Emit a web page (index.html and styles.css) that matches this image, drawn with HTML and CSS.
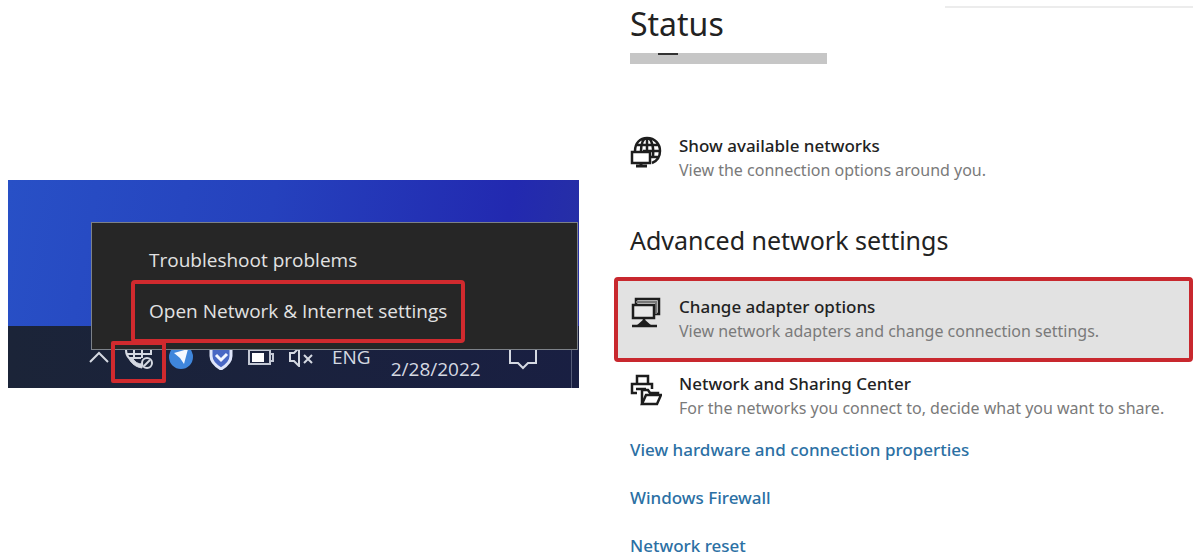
FILE: index.html
```html
<!DOCTYPE html>
<html lang="en">
<head>
  <meta charset="UTF-8">
  <meta name="viewport" content="width=device-width, initial-scale=1.0">
  <title>Network Status</title>
  <link rel="stylesheet" href="styles.css">
</head>
<body>
  <div class="page">
    <!-- Desktop with the tray menu open -->
    <section class="desktop">
      <div class="wallpaper"></div>

      <div class="menu">
        <button type="button" class="menu-item">Troubleshoot problems</button>
        <button type="button" class="menu-item marked">Open Network &amp; Internet settings</button>
      </div>

      <div class="taskbar">
        <button type="button" class="tray" aria-label="Show hidden icons">
          <svg width="20" height="20" viewBox="0 0 20 20"><path d="M1 15l9-9 9 9" fill="none" stroke="#d5d9e2" stroke-width="2"/></svg>
        </button>
        <button type="button" class="tray network" aria-label="Network">
          <svg width="30" height="30" viewBox="0 0 30 30" fill="none" stroke="#d5d9e2" stroke-width="2">
            <path d="M2 8c0 4 1 6 3 8h12M2 12h26M10 6v10M18 6v10M27 8v5"/>
            <path d="M5 17c3 5 7 8 13 9v-4c-4 0-7-2-9-5" fill="#d5d9e2" stroke-width="1"/>
            <circle cx="23" cy="21" r="5" fill="#1b2438"/>
            <path d="M20 24l6-6"/>
          </svg>
        </button>
        <button type="button" class="tray" aria-label="Assistant">
          <svg width="25" height="26" viewBox="0 0 25 26"><circle cx="12" cy="13" r="12" fill="#3f86dc"/><path d="M5 9l14-4-4 15-4-6z" fill="#f4f8ff"/></svg>
        </button>
        <button type="button" class="tray" aria-label="Security">
          <svg width="24" height="26" viewBox="0 0 24 26"><path d="M2 5l10-4 10 4v7c0 6-5 10-10 13C7 22 2 18 2 12z" fill="#4967c4" stroke="#dfe5fa" stroke-width="3"/><path d="M7 11l5 5 6-6" fill="none" stroke="#f3f6ff" stroke-width="3"/></svg>
        </button>
        <button type="button" class="tray" aria-label="Battery">
          <svg width="26" height="20" viewBox="0 0 26 20"><path d="M1 3h21v14H1zM22 7h3v7h-3" fill="none" stroke="#c3c8d4" stroke-width="2"/><path d="M4 6h12v9H4z" fill="#fff"/></svg>
        </button>
        <button type="button" class="tray" aria-label="Volume">
          <svg width="24" height="20" viewBox="0 0 24 20" fill="none" stroke="#d5d9e2" stroke-width="2"><path d="M1 6h4l5-5v18l-5-5H1zM15 8l8 8M23 8l-8 8"/></svg>
        </button>
        <span class="language">ENG</span>
        <time class="date" datetime="2022-02-28">2/28/2022</time>
        <button type="button" class="tray" aria-label="Notifications">
          <svg width="30" height="26" viewBox="0 0 30 26"><path d="M2 2h26v17h-8l-5 5-5-5H2z" fill="none" stroke="#d5d9e2" stroke-width="2"/></svg>
        </button>
        <span class="show-desktop"></span>
      </div>
    </section>

    <!-- Settings page -->
    <main class="settings">
      <h1>Status</h1>
      <div class="usage"></div>

      <a href="#" class="entry">
        <svg class="entry-icon" width="32" height="32" viewBox="0 0 32 32" fill="none" stroke="#1d1d1d" stroke-width="2.5">
          <path d="M5 15C5 7 10 2 17 2c8 0 13 6 13 13 0 6-3 10-8 12M7 9h21M13 15h17M21 21h8M11 15c0-7 2-13 6-13s7 7 6 19M17 2v13"/>
          <path d="M2 16h18v11H2z" fill="#fff"/>
          <path d="M11 27v4M6 30h11" stroke-width="3"/>
        </svg>
        <span class="entry-text">
          <span class="entry-title">Show available networks</span>
          <span class="entry-info">View the connection options around you.</span>
        </span>
      </a>

      <h2>Advanced network settings</h2>

      <a href="#" class="entry selected">
        <svg class="entry-icon" width="32" height="32" viewBox="0 0 32 32" fill="none" stroke="#1d1d1d" stroke-width="2.5">
          <path d="M6 7V2h23v15h-4"/>
          <path d="M6 5h20v12" stroke="#777" stroke-width="2"/>
          <path d="M3 8h21v13H3z" fill="#e9e9e9"/>
          <path d="M14 21v5M2 29h25"/>
          <path d="M14 22l8 7H6z" fill="#1d1d1d" stroke="none"/>
        </svg>
        <span class="entry-text">
          <span class="entry-title">Change adapter options</span>
          <span class="entry-info">View network adapters and change connection settings.</span>
        </span>
      </a>

      <a href="#" class="entry sharing">
        <svg class="entry-icon" width="32" height="32" viewBox="0 0 32 32" fill="none" stroke="#1d1d1d" stroke-width="2.5">
          <path d="M7 10V2h11v8M7 19H2v-9h20v5M6 15h10"/>
          <path d="M12 30V16h6l2 3h8v3" fill="#fff"/>
          <path d="M12 30l4-9h15l-4 9z" fill="#fff"/>
        </svg>
        <span class="entry-text">
          <span class="entry-title">Network and Sharing Center</span>
          <span class="entry-info">For the networks you connect to, decide what you want to share.</span>
        </span>
      </a>

      <nav class="links">
        <a href="#">View hardware and connection properties</a>
        <a href="#">Windows Firewall</a>
        <a href="#">Network reset</a>
      </nav>
    </main>
  </div>
</body>
</html>
```

FILE: styles.css
```css
* {
  box-sizing: border-box;
}

body {
  margin: 0;
  background: #fff;
  font-family: "Noto Sans", "Open Sans", sans-serif;
  font-size: 16px;
  color: #222;
}

.page {
  display: grid;
  grid-template-columns: 571fr 579fr;
  gap: 35px;
  align-items: start;
  padding-left: 8px;
}

button {
  font-family: inherit;
  border: none;
  background: none;
  padding: 0;
  cursor: pointer;
}

/* Desktop */
.desktop {
  position: relative;
  margin-top: 180px;
  font-family: "Open Sans", "Noto Sans", sans-serif;
}

.wallpaper {
  height: 146px;
  background: linear-gradient(100deg, #2850c6, #2541bd 45%, #2229b0 85%, #2730a4);
}

/* Opens over the wallpaper and the taskbar */
.menu {
  position: absolute;
  z-index: 1;
  top: 42px;
  left: 83px;
  right: 1px;
  display: flex;
  flex-direction: column;
  align-items: flex-start;
  gap: 8px;
  padding: 25px 39px 6px;
  background: #262626;
  border: 1px solid #7c8188;
}

.menu-item {
  padding: 0 18px;
  font-size: 19px;
  line-height: 24px;
  color: #e2e2e2;
}

.menu-item.marked {
  padding: 15px 14px 16px;
  border: 4px solid #d02a2e;
  border-radius: 4px;
}

.taskbar {
  display: flex;
  align-items: center;
  gap: 15px;
  height: 62px;
  padding-left: 81px;
  background: linear-gradient(90deg, #1b2438, #191f42);
  color: #d5d9e2;
}

.tray {
  display: flex;
}

.network {
  position: relative;
}

/* Red frame round the network icon */
.network::after {
  content: "";
  position: absolute;
  z-index: 2;
  inset: -1px -12px -11px -13px;
  border: 4px solid #d02a2e;
  border-radius: 2px;
}

.language {
  margin-left: 4px;
  font-size: 19px;
}

.date {
  margin: 24px 12px 0 5px;
  font-size: 19px;
}

.show-desktop {
  align-self: stretch;
  width: 8px;
  margin-left: auto;
  border-left: 1px solid #555c78;
}

/* Settings */
.settings {
  position: relative;
}

.settings::before {
  content: "";
  position: absolute;
  top: 6px;
  right: 0;
  width: 248px;
  height: 2px;
  background: #ececec;
}

h1 {
  margin: 0 16px;
  font-size: 32px;
  line-height: 48px;
  font-weight: 400;
}

.usage {
  width: 197px;
  height: 11px;
  margin: 5px 16px 70px;
  background: #c6c6c6;
}

.usage::before {
  content: "";
  display: block;
  width: 20px;
  height: 2px;
  margin-left: 28px;
  background: #333;
}

h2 {
  margin: 42px 16px 21px;
  font-size: 25px;
  line-height: 32px;
  font-weight: 400;
}

.entry {
  display: flex;
  gap: 17px;
  padding: 0 16px;
  color: #222;
  text-decoration: none;
  white-space: nowrap;
}

.entry-icon {
  flex: none;
  margin-top: 2px;
}

.entry-title,
.entry-info {
  display: block;
  line-height: 24px;
}

.entry-title {
  font-size: 17px;
  font-weight: 500;
}

.entry-info {
  font-size: 16px;
  color: #7a7a7a;
}

.selected {
  padding: 14px 12px 15px;
  background: #e2e2e2;
  border: 4px solid #c8282e;
  border-radius: 4px;
}

.sharing {
  margin-top: 10px;
}

.links {
  display: flex;
  flex-direction: column;
  align-items: flex-start;
  gap: 24px;
  margin: 18px 16px 0;
}

.links a {
  font-size: 17px;
  font-weight: 500;
  line-height: 24px;
  color: #2b70a4;
  text-decoration: none;
}
```
